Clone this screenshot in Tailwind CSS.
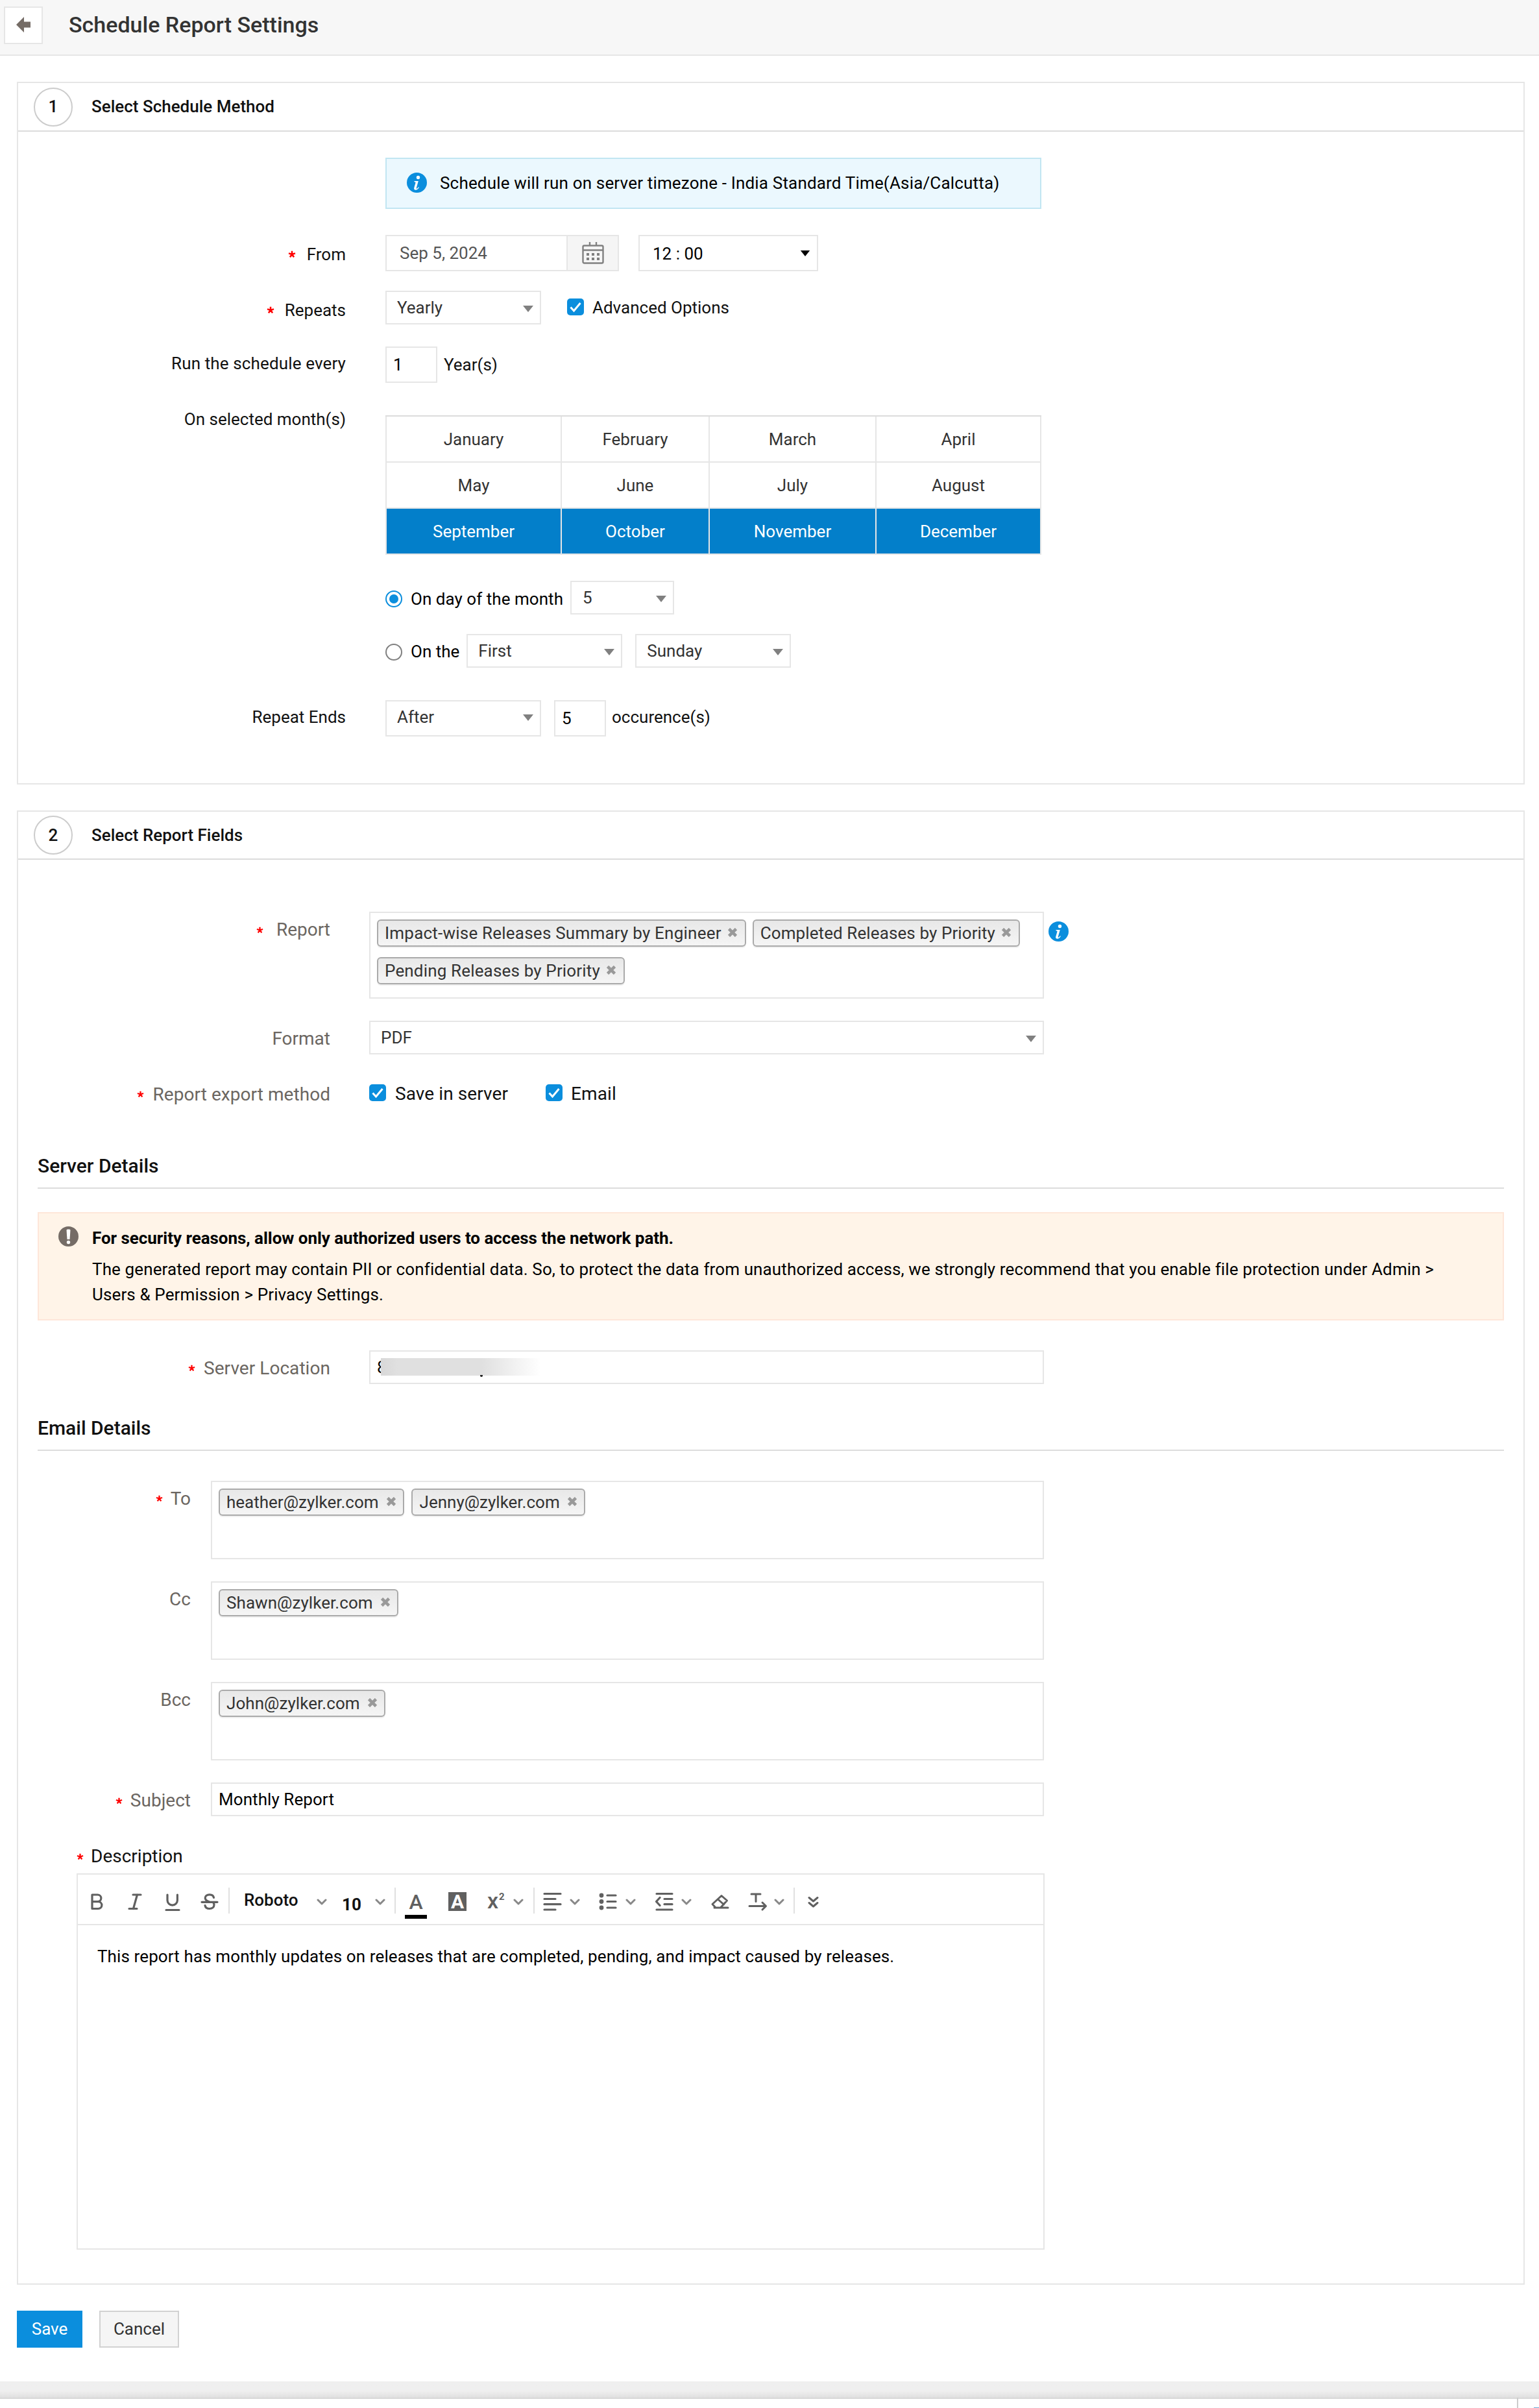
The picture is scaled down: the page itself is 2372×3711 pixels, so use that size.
<!DOCTYPE html>
<html lang="en">
<head>
    <meta charset="UTF-8">
    <meta name="viewport" content="width=device-width, initial-scale=1.0">
    <title>Schedule Report Settings</title>
    <script src="https://cdn.jsdelivr.net/npm/@tailwindcss/browser@4"></script>
</head>
<body class="bg-white font-['Roboto',sans-serif] text-[26px] text-[#111] whitespace-nowrap">

    <!-- Shared icons -->
    <svg class="hidden">
        <symbol id="caret" viewBox="0 0 16 10"><path d="M0 0h16L8 10z" fill="currentColor"/></symbol>
        <symbol id="chevron" viewBox="0 0 16 10"><path d="M2 2l6 6 6-6" fill="none" stroke="currentColor" stroke-width="3" stroke-linecap="round" stroke-linejoin="round"/></symbol>
        <symbol id="check" viewBox="0 0 26 26"><rect width="26" height="26" rx="5" fill="#0b8edd"/><path d="M5.5 13.5l5 5.5L20.5 7" fill="none" stroke="#fff" stroke-width="3"/></symbol>
        <symbol id="cross" viewBox="0 0 16 14"><path d="M2.5 1.5l11 11M13.5 1.5l-11 11" fill="none" stroke="#999" stroke-width="4.6"/></symbol>
        <symbol id="star" viewBox="0 0 12 12"><path d="M6 6V.8M6 6l5-1.600M6 6l3.100 4.300M6 6l-3.100 4.300M6 6L1 4.400" fill="none" stroke="#f00" stroke-width="2.500"/></symbol>
        <symbol id="info" viewBox="0 0 31 31"><circle cx="15.5" cy="15.5" r="15.5" fill="#0b8edd"/><circle cx="17.5" cy="7.5" r="2.7" fill="#fff"/><path d="M11.5 13h6.300l-3 10.500c-.3 1.200.3 1.500 1 1 .8-.5 1.500-1.300 2.200-2.300l.9.600c-1.500 2.500-3.300 3.900-5.300 3.900-2.200 0-2.900-1.300-2.300-3.500l2.100-7.300c.3-1.100 0-1.600-1.900-1.700z" fill="#fff"/></symbol>
    </svg>

    <!-- Header -->
    <header class="h-[86px] bg-[#f7f7f7] border-b-2 border-[#e6e6e6] flex items-start pl-[6px] pt-[10px]">
        <button class="w-[60px] h-[58px] bg-white border-2 border-[#e6e6e6] flex items-center justify-center">
            <svg class="w-[22px] h-[24px] -mt-[2px] -ml-[1px]" viewBox="0 0 22 24"><path d="M12 0v7.500h10v9H12V24L0 12z" fill="#756c66"/></svg>
        </button>
        <h1 class="ml-[40px] text-[34px] font-medium leading-[56px] text-[#333]">Schedule Report Settings</h1>
    </header>

    <main class="mx-[26px] w-[2324px] pt-[40px] -mb-px">

        <!-- Step 1 -->
        <section class="h-[1083px] border-2 border-[#e6e6e6]">
            <div class="h-[75px] border-b-2 border-[#dcdcdc] flex items-center pl-[24px]">
                <span class="w-[60px] h-[60px] rounded-full border-2 border-[#ccc] flex items-center justify-center font-medium">1</span>
                <h2 class="ml-[29px] font-medium">Select Schedule Method</h2>
            </div>

            <div class="mt-[40px] ml-[566px] w-[1011px] h-[79px] bg-[#ebf8fe] border-2 border-[#c1e6f2] flex items-center pl-[31px] text-black">
                <svg class="w-[31px] h-[31px] -mt-[3px]"><use href="#info"/></svg>
                <span class="ml-[20px] tracking-[0.17px]">Schedule will run on server timezone - India Standard Time(Asia/Calcutta)</span>
            </div>

            <div class="mt-[40px] h-[56px] flex items-center">
                <label class="w-[505px] pt-[4px] flex items-center justify-end"><svg class="w-[12px] h-[12px] mr-[17px]"><use href="#star"/></svg>From</label>
                <div class="ml-[61px] w-[360px] h-[56px] border-2 border-[#e6e6e6] flex text-[#555]">
                    <span class="flex-1 pl-[20px] leading-[52px]">Sep 5, 2024</span>
                    <span class="w-[79px] bg-[#f5f5f5] border-l-2 border-[#e6e6e6] flex items-center justify-center">
                        <svg class="w-[34px] h-[34px]" viewBox="0 0 34 34" fill="none" stroke="#808080" stroke-width="2.400">
                            <rect x="1.500" y="5.500" width="31" height="27" rx="2"/>
                            <path d="M1.500 12.500h31M12 0v6M22 0v6"/>
                            <path d="M7 19h4M15 19h4M23 19h4M7 26h4M15 26h4M23 26h4" stroke-width="4"/>
                        </svg>
                    </span>
                </div>
                <div class="ml-[30px] w-[277px] h-[56px] border-2 border-[#e6e6e6] flex items-center justify-between pl-[20px] pr-[10px] text-black">
                    <span class="pt-[2px]">12 : 00</span>
                    <svg class="w-[16px] h-[9px]"><use href="#caret"/></svg>
                </div>
            </div>

            <div class="mt-[30px] h-[52px] flex items-center">
                <label class="w-[505px] pt-[8px] flex items-center justify-end"><svg class="w-[12px] h-[12px] mr-[16px]"><use href="#star"/></svg>Repeats</label>
                <div class="ml-[61px] w-[240px] h-[52px] border-2 border-[#e6e6e6] flex items-center justify-between pl-[16px] pr-[10px] text-[#333]">
                    Yearly<svg class="w-[16px] h-[10px] mt-[3px] text-[#808080]"><use href="#caret"/></svg>
                </div>
                <svg class="ml-[40px] -mt-[2px] w-[26px] h-[26px]"><use href="#check"/></svg>
                <span class="ml-[13px]">Advanced Options</span>
            </div>

            <div class="mt-[34px] h-[56px] flex items-center">
                <label class="w-[505px] pb-[4px] text-right tracking-[0.13px]">Run the schedule every</label>
                <div class="ml-[61px] w-[80px] h-[56px] border-2 border-[#e6e6e6] pl-[10px] leading-[52px] text-black">1</div>
                <span class="ml-[10px]">Year(s)</span>
            </div>

            <div class="mt-[50px] flex items-start">
                <label class="w-[505px] text-right leading-[12px]">On selected month(s)</label>
                <!-- Months grid, selected ones in blue -->
                <div class="ml-[61px] w-[1011px] h-[215px] px-[2px] bg-[#e6e6e6] border-t-2 border-t-[#dcdcdc] text-[#333]">
                    <div class="grid grid-cols-[268px_226px_255px_252px] auto-rows-[69px] gap-[2px] text-center leading-[71px]">
                        <span class="bg-white">January</span>
                        <span class="bg-white">February</span>
                        <span class="bg-white">March</span>
                        <span class="bg-white">April</span>
                        <span class="bg-white">May</span>
                        <span class="bg-white">June</span>
                        <span class="bg-white">July</span>
                        <span class="bg-white">August</span>
                        <span class="bg-[#037fca] text-white">September</span>
                        <span class="bg-[#037fca] text-white">October</span>
                        <span class="bg-[#037fca] text-white">November</span>
                        <span class="bg-[#037fca] text-white">December</span>
                    </div>
                </div>
            </div>

            <div class="mt-[40px] ml-[566px] h-[52px] flex items-center">
                <span class="w-[26px] h-[26px] mt-[3px] rounded-full border-2 border-[#0b8edd] flex items-center justify-center"><span class="w-[14px] h-[14px] rounded-full bg-[#0b8edd]"></span></span>
                <span class="ml-[13px] pt-[4px] tracking-[0.04px] text-black">On day of the month</span>
                <div class="ml-[11px] w-[160px] h-[52px] border-2 border-[#e6e6e6] flex items-center justify-between pl-[17px] pr-[10px] text-[#333]">
                    5<svg class="w-[16px] h-[10px] mt-[3px] text-[#808080]"><use href="#caret"/></svg>
                </div>
            </div>

            <div class="mt-[30px] ml-[566px] h-[52px] flex items-center">
                <span class="w-[26px] h-[26px] mt-[3px] rounded-full border-2 border-[#808080]"></span>
                <span class="ml-[13px] pt-[3px] text-black">On the</span>
                <div class="ml-[11px] w-[240px] h-[52px] border-2 border-[#e6e6e6] flex items-center justify-between pl-[16px] pr-[10px] text-[#333]">
                    First<svg class="w-[16px] h-[10px] mt-[3px] text-[#808080]"><use href="#caret"/></svg>
                </div>
                <div class="ml-[20px] w-[240px] h-[52px] border-2 border-[#e6e6e6] flex items-center justify-between pl-[16px] pr-[10px] text-[#333]">
                    Sunday<svg class="w-[16px] h-[10px] mt-[3px] text-[#808080]"><use href="#caret"/></svg>
                </div>
            </div>

            <div class="mt-[50px] h-[56px] flex items-center">
                <label class="w-[505px] pb-[4px] text-right">Repeat Ends</label>
                <div class="ml-[61px] w-[240px] h-[56px] border-2 border-[#e6e6e6] flex items-center justify-between pl-[16px] pr-[10px] text-[#333]">
                    <span class="pb-[4px]">After</span><svg class="w-[16px] h-[10px] -mt-[3px] text-[#808080]"><use href="#caret"/></svg>
                </div>
                <div class="ml-[20px] w-[80px] h-[56px] border-2 border-[#e6e6e6] pl-[10px] leading-[52px] text-black">5</div>
                <span class="ml-[9px] pb-[4px]">occurence(s)</span>
            </div>
        </section>

        <!-- Step 2 -->
        <section class="mt-[40px] h-[2272px] border-2 border-[#e6e6e6]">
            <div class="h-[74px] border-b-2 border-[#dcdcdc] flex items-center pl-[24px]">
                <span class="w-[60px] h-[60px] rounded-full border-2 border-[#ccc] flex items-center justify-center font-medium">2</span>
                <h2 class="ml-[29px] font-medium">Select Report Fields</h2>
            </div>

            <div class="mt-[80px] flex items-start">
                <label class="w-[481px] flex items-center justify-end text-[28px] leading-[56px] text-[#6b6661]"><svg class="w-[11px] h-[11px] mr-[20px]"><use href="#star"/></svg>Report</label>
                <div class="ml-[60px] w-[1040px] h-[134px] border-2 border-[#e6e6e6] p-[10px] flex flex-wrap content-start gap-x-[10px] gap-y-[16px] text-[#333]">
                    <span class="h-[42px] border-2 border-[#aaa] rounded-[6px] bg-linear-to-b from-[#e8e8e8] to-[#f5f5f5] shadow-[0_2px_0_#f0f0f0] pl-[10px] pr-[11px] flex items-center"><span class="tracking-[0.22px]">Impact-wise Releases Summary by Engineer</span><svg class="ml-[9px] mb-[3px] w-[16px] h-[14px]"><use href="#cross"/></svg></span>
                    <span class="h-[42px] border-2 border-[#aaa] rounded-[6px] bg-linear-to-b from-[#e8e8e8] to-[#f5f5f5] shadow-[0_2px_0_#f0f0f0] pl-[10px] pr-[11px] flex items-center"><span class="tracking-[0.1px]">Completed Releases by Priority</span><svg class="ml-[9px] mb-[3px] w-[16px] h-[14px]"><use href="#cross"/></svg></span>
                    <span class="h-[42px] border-2 border-[#aaa] rounded-[6px] bg-linear-to-b from-[#e8e8e8] to-[#f5f5f5] shadow-[0_2px_0_#f0f0f0] pl-[10px] pr-[11px] flex items-center"><span class="tracking-[0.16px]">Pending Releases by Priority</span><svg class="ml-[9px] mb-[3px] w-[16px] h-[14px]"><use href="#cross"/></svg></span>
                </div>
                <svg class="ml-[7px] mt-[15px] w-[31px] h-[31px]"><use href="#info"/></svg>
            </div>

            <div class="mt-[34px] h-[52px] flex items-center">
                <label class="w-[481px] pt-[3px] text-right text-[28px] text-[#6b6661]">Format</label>
                <div class="ml-[60px] w-[1040px] h-[52px] border-2 border-[#e6e6e6] flex items-center justify-between pl-[16px] pr-[10px] text-[#333]">
                    PDF<svg class="w-[16px] h-[10px] mt-[3px] text-[#808080]"><use href="#caret"/></svg>
                </div>
            </div>

            <div class="mt-[33px] h-[52px] flex items-center text-[28px]">
                <label class="w-[481px] pt-[5px] flex items-center justify-end text-[#6b6661] tracking-[0.05px]"><svg class="w-[11px] h-[11px] mr-[13px]"><use href="#star"/></svg>Report export method</label>
                <svg class="ml-[60px] w-[26px] h-[26px]"><use href="#check"/></svg>
                <span class="ml-[14px] pt-[3px] tracking-[0.09px]">Save in server</span>
                <svg class="ml-[58px] w-[26px] h-[26px]"><use href="#check"/></svg>
                <span class="ml-[13px] pt-[3px] tracking-[0.1px]">Email</span>
            </div>

            <h3 class="mt-[56px] mx-[30px] h-[66px] border-b-2 border-[#dcdcdc] text-[30px] font-medium leading-[62px]">Server Details</h3>

            <div class="mt-[36px] mx-[30px] h-[167px] bg-[#fff4e8] border-2 border-[#fee6d9] flex pl-[30px] text-black">
                <svg class="mt-[20px] w-[31px] h-[31px]" viewBox="0 0 31 31"><circle cx="15.500" cy="15.500" r="15.500" fill="#756c66"/><path d="M12.500 5.500c0-1.500 6-1.500 6 0l-1 14.500h-4z" fill="#fff"/><circle cx="15.500" cy="24.500" r="2.700" fill="#fff"/></svg>
                <div class="ml-[21px] pt-[18px]">
                    <p class="font-bold leading-[40px] tracking-[-0.04px]">For security reasons, allow only authorized users to access the network path.</p>
                    <p class="mt-[9px] leading-[39px] tracking-[0.12px]">The generated report may contain PII or confidential data. So, to protect the data from unauthorized access, we strongly recommend that you enable file protection under Admin &gt;<br>Users &amp; Permission &gt; Privacy Settings.</p>
                </div>
            </div>

            <div class="mt-[46px] h-[52px] flex items-center">
                <label class="w-[481px] pt-[3px] flex items-center justify-end text-[28px] text-[#6b6661] tracking-[0.05px]"><svg class="w-[11px] h-[11px] mr-[13px]"><use href="#star"/></svg>Server Location</label>
                <div class="ml-[60px] w-[1040px] h-[52px] border-2 border-[#e6e6e6] flex items-center pl-[10px] text-black">
                    <!-- Masked path -->
                    <span>8</span>
                    <span class="-ml-[9px] -mt-[2px] w-[324px] h-[27px] bg-[linear-gradient(to_right,#d8d8d8,#e0e0e0_8%,#e0e0e0_48%,#fff_76%)]"></span>
                    <span class="-ml-[171px] mt-[27px] w-[4px] h-[3px] rounded-b bg-[#222]"></span>
                </div>
            </div>

            <h3 class="mt-[37px] mx-[30px] h-[66px] border-b-2 border-[#dcdcdc] text-[30px] font-medium leading-[62px]">Email Details</h3>

            <div class="mt-[46px] flex items-start">
                <label class="w-[266px] flex items-center justify-end text-[28px] leading-[55px] text-[#6b6661]"><svg class="w-[11px] h-[11px] mr-[12px]"><use href="#star"/></svg>To</label>
                <div class="ml-[31px] w-[1284px] h-[121px] border-2 border-[#e6e6e6] p-[10px] flex items-start gap-[11px] text-[#333]">
                    <span class="h-[42px] border-2 border-[#aaa] rounded-[6px] bg-linear-to-b from-[#e8e8e8] to-[#f5f5f5] shadow-[0_2px_0_#f0f0f0] pl-[10px] pr-[10px] flex items-center">heather@zylker.com<svg class="ml-[11px] mb-[3px] w-[16px] h-[14px]"><use href="#cross"/></svg></span>
                    <span class="h-[42px] border-2 border-[#aaa] rounded-[6px] bg-linear-to-b from-[#e8e8e8] to-[#f5f5f5] shadow-[0_2px_0_#f0f0f0] pl-[11px] pr-[10px] flex items-center">Jenny@zylker.com<svg class="ml-[11px] mb-[3px] w-[16px] h-[14px]"><use href="#cross"/></svg></span>
                </div>
            </div>

            <div class="mt-[34px] flex items-start">
                <label class="w-[266px] text-right text-[28px] leading-[55px] text-[#6b6661]">Cc</label>
                <div class="ml-[31px] w-[1284px] h-[121px] border-2 border-[#e6e6e6] p-[10px] flex items-start text-[#333]">
                    <span class="h-[42px] border-2 border-[#aaa] rounded-[6px] bg-linear-to-b from-[#e8e8e8] to-[#f5f5f5] shadow-[0_2px_0_#f0f0f0] pl-[10px] pr-[10px] flex items-center tracking-[0.06px]">Shawn@zylker.com<svg class="ml-[11px] mb-[3px] w-[16px] h-[14px]"><use href="#cross"/></svg></span>
                </div>
            </div>

            <div class="mt-[34px] flex items-start">
                <label class="w-[266px] text-right text-[28px] leading-[55px] text-[#6b6661]">Bcc</label>
                <div class="ml-[31px] w-[1284px] h-[121px] border-2 border-[#e6e6e6] p-[10px] flex items-start text-[#333]">
                    <span class="h-[42px] border-2 border-[#aaa] rounded-[6px] bg-linear-to-b from-[#e8e8e8] to-[#f5f5f5] shadow-[0_2px_0_#f0f0f0] pl-[10px] pr-[10px] flex items-center tracking-[0.06px]">John@zylker.com<svg class="ml-[11px] mb-[3px] w-[16px] h-[14px]"><use href="#cross"/></svg></span>
                </div>
            </div>

            <div class="mt-[34px] h-[52px] flex items-center">
                <label class="w-[266px] pt-[4px] flex items-center justify-end text-[28px] text-[#6b6661]"><svg class="w-[11px] h-[11px] mr-[12px]"><use href="#star"/></svg>Subject</label>
                <div class="ml-[31px] w-[1284px] h-[52px] border-2 border-[#e6e6e6] pl-[10px] leading-[48px] tracking-[0.07px] text-black">Monthly Report</div>
            </div>

            <label class="mt-[42px] ml-[90px] h-[40px] flex items-center text-[28px]"><svg class="w-[11px] h-[11px] mr-[11px]"><use href="#star"/></svg>Description</label>

            <!-- Editor -->
            <div class="mt-[6px] ml-[90px] w-[1492px] h-[580px] border-2 border-[#e6e6e6]">
                <div class="h-[78px] border-b-2 border-[#e6e6e6] pt-[20px] flex items-start text-[#606060]">
                    <svg class="ml-[20px] w-[20px] h-[40px]" viewBox="0 0 20 40" fill="none" stroke="currentColor" stroke-width="3.200" stroke-linejoin="round"><path d="M2 11h8.500a5.300 5.300 0 0 1 0 10.700H2zM2 21.700h9.500a5.300 5.300 0 0 1 0 10.800H2z"/></svg>
                    <svg class="ml-[37px] w-[22px] h-[40px]" viewBox="0 0 22 40" fill="none" stroke="currentColor" stroke-width="3.200" stroke-linecap="round"><path d="M8 11h12M2 32.500h12M14.500 11l-6 21.500"/></svg>
                    <svg class="ml-[35px] w-[24px] h-[40px]" viewBox="0 0 24 40" fill="none" stroke="currentColor" stroke-width="3.200" stroke-linecap="round"><path d="M4 11v8.500a7.700 7.700 0 0 0 15.400 0V11M2 34.500h20"/></svg>
                    <svg class="ml-[31px] w-[28px] h-[40px]" viewBox="0 0 28 40" fill="none" stroke="currentColor" stroke-width="3.200" stroke-linecap="round"><path d="M20.500 15.500c-.5-3-3-4.700-6.500-4.700-4 0-6.800 2-6.800 5.200 0 2.500 1.500 4.500 6.800 6M2 22.300h24M20 23.500c.8 1 1 2 1 3 0 3.500-2.800 6-7 6-4 0-6.500-2-7-5"/></svg>
                    <span class="ml-[15px] w-[2px] h-[40px] bg-[#e0e0e0]"></span>
                    <span class="ml-[22px] w-[86px] leading-[39px] font-medium text-[#111]">Roboto</span>
                    <svg class="ml-[26px] mt-[17px] w-[16px] h-[10px] text-[#888]"><use href="#chevron"/></svg>
                    <span class="ml-[23px] w-[32px] leading-[52px] font-bold text-[#111]">10</span>
                    <svg class="ml-[19px] mt-[17px] w-[16px] h-[10px] text-[#888]"><use href="#chevron"/></svg>
                    <span class="ml-[14px] w-[2px] h-[40px] bg-[#e0e0e0]"></span>
                    <span class="ml-[14px] w-[34px] h-[48px] border-b-6 border-black text-center text-[32px] leading-[44px] font-medium">A</span>
                    <span class="ml-[33px] mt-[7px] w-[28px] h-[29px] bg-[#606060] text-white text-center text-[30px] leading-[30px] font-bold">A</span>
                    <span class="ml-[32px] w-[30px] h-[40px] flex font-medium"><span class="text-[34px] leading-[43px] -mt-px">x</span><span class="ml-[1px] text-[15px] leading-[29px] font-bold">2</span></span>
                    <svg class="ml-[10px] mt-[17px] w-[16px] h-[10px] text-[#888]"><use href="#chevron"/></svg>
                    <span class="ml-[15px] w-[2px] h-[40px] bg-[#e0e0e0]"></span>
                    <svg class="ml-[13px] w-[29px] h-[40px]" viewBox="0 0 29 40" fill="none" stroke="currentColor" stroke-width="3.200" stroke-linecap="round"><path d="M2 9.500h25M2 17.500h17M2 25.700h25M2 34h17"/></svg>
                    <svg class="ml-[12px] mt-[17px] w-[16px] h-[10px] text-[#888]"><use href="#chevron"/></svg>
                    <svg class="ml-[29px] w-[29px] h-[40px]" viewBox="0 0 29 40" fill="none" stroke="currentColor" stroke-width="3.200" stroke-linecap="round"><path d="M13 12h13M13 21.500h13M13 31h13"/><g fill="currentColor" stroke="none"><circle cx="4" cy="12" r="3.400"/><circle cx="4" cy="21.500" r="3.400"/><circle cx="4" cy="31" r="3.400"/></g></svg>
                    <svg class="ml-[12px] mt-[17px] w-[16px] h-[10px] text-[#888]"><use href="#chevron"/></svg>
                    <svg class="ml-[29px] w-[30px] h-[40px]" viewBox="0 0 30 40" fill="none" stroke="currentColor" stroke-width="3.200" stroke-linecap="round" stroke-linejoin="round"><path d="M3 9.500h24M15 17.500h12M15 25.700h12M3 34h24M8 15.500L2.500 21.500 8 27.500"/></svg>
                    <svg class="ml-[11px] mt-[17px] w-[16px] h-[10px] text-[#888]"><use href="#chevron"/></svg>
                    <svg class="ml-[29px] w-[30px] h-[40px]" viewBox="0 0 30 40" fill="none" stroke="currentColor" stroke-width="3" stroke-linecap="round" stroke-linejoin="round"><path d="M17 12.500L25.500 20 15.500 31H8l-5-5.500zM11.500 18l9 8M6 31h21"/></svg>
                    <svg class="ml-[28px] w-[30px] h-[40px]" viewBox="0 0 30 40" fill="none" stroke="currentColor" stroke-width="3" stroke-linecap="round" stroke-linejoin="round"><path d="M5 10h14M12 10v11.500M2 28.500h25M22 23l5.500 5.500L22 34"/></svg>
                    <svg class="ml-[10px] mt-[17px] w-[16px] h-[10px] text-[#888]"><use href="#chevron"/></svg>
                    <span class="ml-[14px] w-[2px] h-[40px] bg-[#e0e0e0]"></span>
                    <svg class="ml-[20px] w-[17px] h-[40px]" viewBox="0 0 17 40" fill="none" stroke="currentColor" stroke-width="3" stroke-linecap="round" stroke-linejoin="round"><path d="M2 15.500l6.500 5.500 6.500-5.500M2 23.500l6.500 5.500 6.500-5.500"/></svg>
                </div>
                <p class="pl-[30px] pt-[28px] leading-[40px] tracking-[0.11px] text-black">This report has monthly updates on releases that are completed, pending, and impact caused by releases.</p>
            </div>
        </section>

        <!-- Buttons -->
        <div class="mt-[40px] flex gap-[26px]">
            <button class="w-[101px] h-[57px] bg-[#0b8edd] text-white">Save</button>
            <button class="w-[123px] h-[57px] bg-[#f5f5f5] border-2 border-[#d2d2d2] text-[#333]">Cancel</button>
        </div>
    </main>

    <!-- Bottom bar -->
    <footer class="mt-[53px]">
        <div class="h-[27px] border-b-2 border-[#d8d8d8] bg-linear-to-b from-[#efefef] from-60% to-[#e0e0e0]"></div>
        <div class="h-[14px] flex justify-end items-end">
            <span class="-mt-[2px] w-[2px] h-[16px] bg-[#ccc]"></span>
            <span class="ml-[24px] w-[8px] h-[1px] bg-[#6fa8d6]"></span>
        </div>
    </footer>
</body>
</html>
